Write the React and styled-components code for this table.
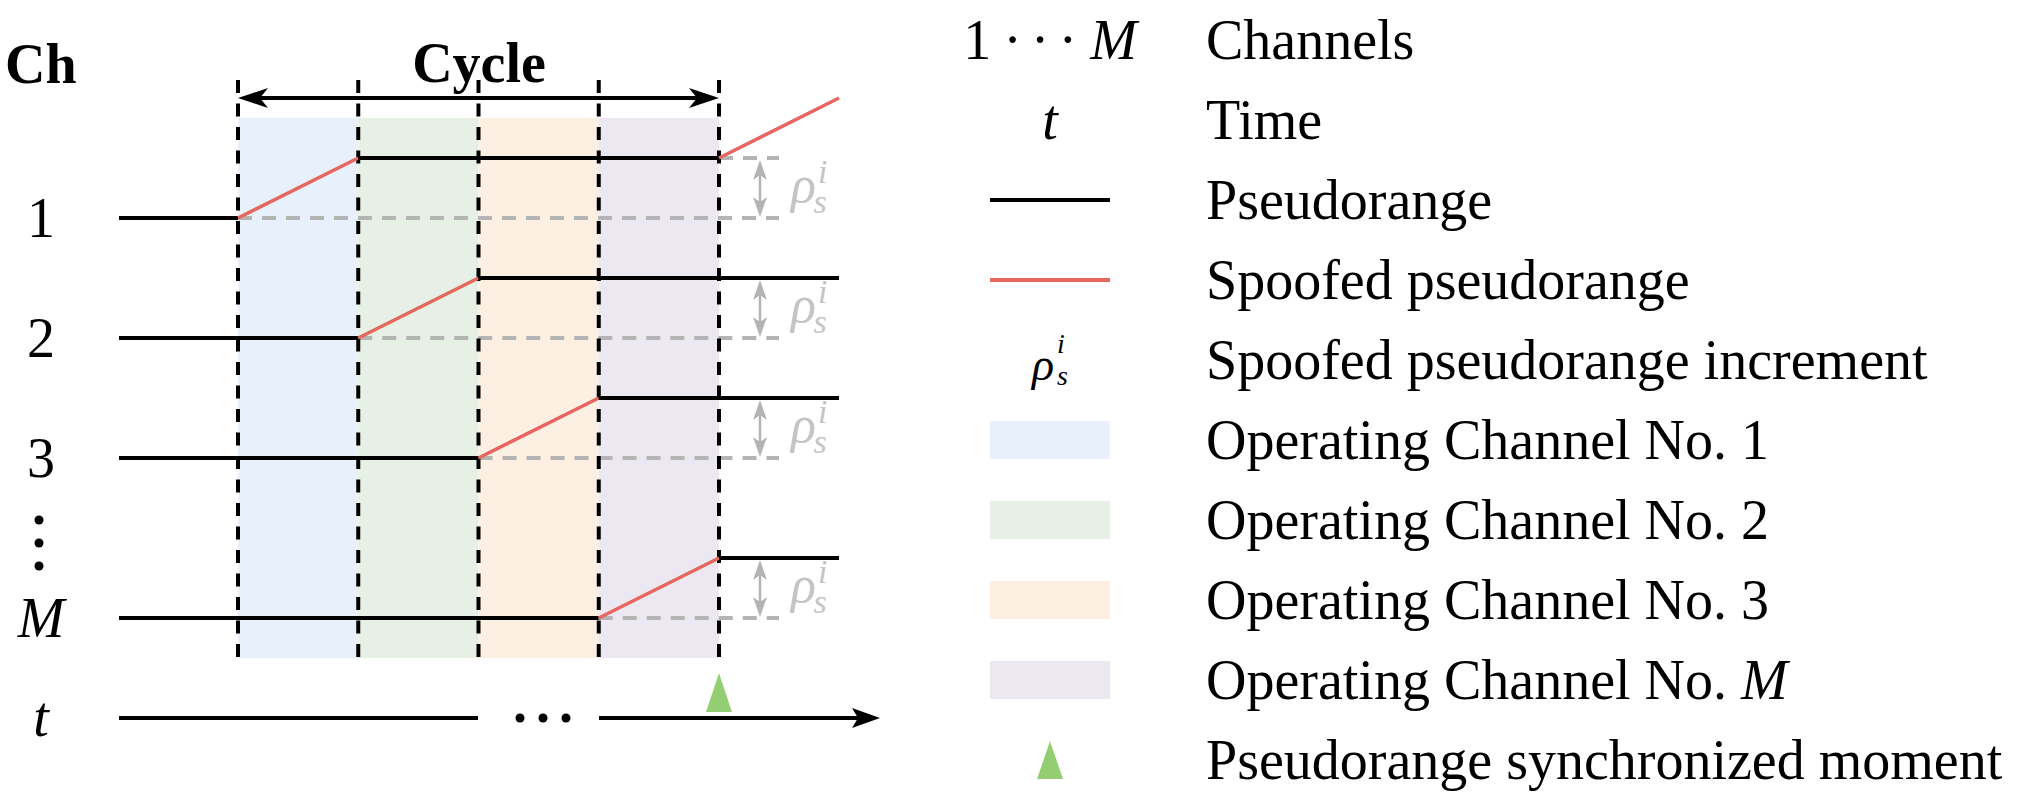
import React from 'react';
import styled, { createGlobalStyle } from 'styled-components';

const GlobalStyle = createGlobalStyle`
  html, body { margin: 0; padding: 0; background: #ffffff; }
  body {
    width: 2020px;
    height: 800px;
    overflow: hidden;
    font-family: "Liberation Serif", "Times New Roman", serif;
    color: #000000;
  }
`;

const BANDS = ['#e8f0fc', '#e7f0e5', '#fdf0e3', '#ece8f1'];
const RED = '#e5675f';
const GRAY = '#b4b4b4';
const RHO_GRAY = '#c4c4c4';
const GREEN = '#93cf72';

const X = [238, 358.25, 478.5, 598.75, 719];
const LEFT = 119;
const RIGHT = 839;
const GUIDE_END = 779;
const RISE = 60;
const ROWS = [
  { label: '1', y: 218 },
  { label: '2', y: 338 },
  { label: '3', y: 458 },
  { label: 'M', y: 618, italic: true },
];

/* ---------- page layout ---------- */
const Page = styled.div`
  display: flex;
  align-items: flex-start;
  width: 2020px;
  height: 800px;
`;

/* ---------- diagram (drawing) ---------- */
const Figure = styled.svg`
  display: block;
  flex: 0 0 960px;
  width: 960px;
  height: 800px;
`;

const Band = styled.rect`
  fill: ${(p) => p.$fill};
`;

const Solid = styled.line`
  stroke: ${(p) => p.$color || '#000'};
  stroke-width: ${(p) => p.$w || 4}px;
  stroke-linecap: butt;
`;

const Guide = styled.line`
  stroke: ${GRAY};
  stroke-width: 4px;
  stroke-dasharray: 14 10;
`;

const Divider = styled.line`
  stroke: #000;
  stroke-width: 4px;
  stroke-dasharray: 13 10.5;
`;

const Head = styled.path`
  fill: ${(p) => p.$color || '#000'};
`;

const Dot = styled.circle`
  fill: #000;
`;

const Marker = styled.polygon`
  fill: ${GREEN};
`;

const Label = styled.text`
  font-family: "Liberation Serif", "Times New Roman", serif;
  font-size: ${(p) => p.$size || 56}px;
  font-weight: ${(p) => (p.$bold ? 700 : 400)};
  font-style: ${(p) => (p.$italic ? 'italic' : 'normal')};
  fill: ${(p) => p.$color || '#000'};
`;

const Script = styled.tspan`
  font-size: 34px;
`;

function RhoMark({ y }) {
  return (
    <Label x={791} y={y - 16} $size={52} $italic $color={RHO_GRAY}>
      ρ
      <Script dx={2} dy={-19}>i</Script>
      <Script dx={-14} dy={30}>s</Script>
    </Label>
  );
}

function Increment({ yHigh, yLow }) {
  const x = 760;
  const top = yHigh + 2;
  const bot = yLow - 1;
  return (
    <g>
      <Solid x1={x} x2={x} y1={top + 14} y2={bot - 14} $color={GRAY} $w={2.5} />
      <Head $color={GRAY} d={`M ${x} ${top} L ${x + 7} ${top + 20} L ${x} ${top + 15} L ${x - 7} ${top + 20} Z`} />
      <Head $color={GRAY} d={`M ${x} ${bot} L ${x + 7} ${bot - 20} L ${x} ${bot - 15} L ${x - 7} ${bot - 20} Z`} />
    </g>
  );
}

function Diagram() {
  return (
    <Figure viewBox="0 0 960 800">
      {BANDS.map((c, i) => (
        <Band key={c} x={X[i]} y={118} width={X[i + 1] - X[i]} height={540} $fill={c} />
      ))}

      {ROWS.map((r, k) => (
        <Guide key={`g${k}`} x1={X[k]} x2={GUIDE_END} y1={r.y} y2={r.y} />
      ))}
      <Guide x1={719} x2={GUIDE_END} y1={158} y2={158} />

      {X.map((x) => (
        <Divider key={x} x1={x} x2={x} y1={80} y2={658} />
      ))}

      {/* cycle arrow */}
      <Solid x1={258} x2={699} y1={98} y2={98} />
      <Head d="M 238 98 L 268 88 L 260 98 L 268 108 Z" />
      <Head d="M 719 98 L 689 88 L 697 98 L 689 108 Z" />

      {/* channel traces */}
      {ROWS.map((r, k) => {
        const x0 = X[k];
        const x1 = X[k + 1];
        const yHigh = r.y - RISE;
        return (
          <g key={`r${k}`}>
            <Solid x1={LEFT} x2={x0} y1={r.y} y2={r.y} />
            <Solid x1={x0} y1={r.y} x2={x1} y2={yHigh} $color={RED} $w={3.5} />
            <Solid x1={x1} x2={k === 0 ? 719 : RIGHT} y1={yHigh} y2={yHigh} />
            {k === 0 && <Solid x1={719} y1={158} x2={RIGHT} y2={98} $color={RED} $w={3.5} />}
            <Increment yHigh={yHigh} yLow={r.y} />
            <RhoMark y={r.y} />
            <Label x={41} y={r.y + 19} textAnchor="middle" $italic={r.italic}>{r.label}</Label>
          </g>
        );
      })}

      {/* vertical ellipsis between rows */}
      <Dot cx={39} cy={520} r={4.5} />
      <Dot cx={39} cy={543} r={4.5} />
      <Dot cx={39} cy={566} r={4.5} />

      {/* time axis */}
      <Solid x1={LEFT} x2={478} y1={718} y2={718} />
      <Dot cx={520} cy={718} r={4.5} />
      <Dot cx={543} cy={718} r={4.5} />
      <Dot cx={566} cy={718} r={4.5} />
      <Solid x1={599} x2={862} y1={718} y2={718} />
      <Head d="M 880 718 L 852 708 L 858 718 L 852 728 Z" />
      <Marker points="706,712 732,712 719,673" />
      <Label x={41} y={736} textAnchor="middle" $italic>t</Label>

      <Label x={5} y={83} $bold>Ch</Label>
      <Label x={479} y={82} textAnchor="middle" $bold>Cycle</Label>
    </Figure>
  );
}

/* ---------- legend ---------- */
const Legend = styled.div`
  display: flex;
  flex-direction: column;
`;

const LegendRow = styled.div`
  display: grid;
  grid-template-columns: 180px max-content;
  column-gap: 66px;
  align-items: center;
  height: 80px;
`;

const SymbolCell = styled.div`
  display: flex;
  justify-content: center;
  align-items: center;
  height: 80px;
`;

const Caption = styled.span`
  font-size: 56px;
  line-height: 80px;
  white-space: nowrap;
`;

const Var = styled.i`
  font-style: italic;
`;

const MathText = styled.span`
  display: inline-flex;
  align-items: baseline;
  font-size: 56px;
  line-height: 80px;
`;

const Cdots = styled.span`
  letter-spacing: 9px;
  margin: 0 4px 0 12px;
`;

const LineMark = styled.span`
  display: block;
  width: 120px;
  height: 4px;
  background: ${(p) => p.$color};
`;

const Swatch = styled.span`
  display: block;
  width: 120px;
  height: 38px;
  background: ${(p) => p.$color};
`;

const Triangle = styled.span`
  display: block;
  width: 0;
  height: 0;
  border-left: 13px solid transparent;
  border-right: 13px solid transparent;
  border-bottom: 38px solid ${GREEN};
`;

const RhoSym = styled.span`
  display: inline-flex;
  align-items: center;
`;

const RhoGlyph = styled.span`
  font-style: italic;
  font-size: 46px;
  line-height: 46px;
  padding-top: 10px;
`;

const ScriptStack = styled.span`
  display: inline-flex;
  flex-direction: column;
  font-style: italic;
  font-size: 28px;
  line-height: 24px;
  gap: 8px;
  margin-left: 3px;
`;

const ITEMS = [
  {
    key: 'ch',
    sym: (
      <MathText>
        1<Cdots>···</Cdots>
        <Var>M</Var>
      </MathText>
    ),
    text: 'Channels',
  },
  { key: 't', sym: <MathText><Var>t</Var></MathText>, text: 'Time' },
  { key: 'pr', sym: <LineMark $color="#000" />, text: 'Pseudorange' },
  { key: 'spr', sym: <LineMark $color={RED} />, text: 'Spoofed pseudorange' },
  {
    key: 'rho',
    sym: (
      <RhoSym>
        <RhoGlyph>ρ</RhoGlyph>
        <ScriptStack>
          <span>i</span>
          <span>s</span>
        </ScriptStack>
      </RhoSym>
    ),
    text: 'Spoofed pseudorange increment',
  },
  { key: 'op1', sym: <Swatch $color={BANDS[0]} />, text: 'Operating Channel No. 1' },
  { key: 'op2', sym: <Swatch $color={BANDS[1]} />, text: 'Operating Channel No. 2' },
  { key: 'op3', sym: <Swatch $color={BANDS[2]} />, text: 'Operating Channel No. 3' },
  {
    key: 'opm',
    sym: <Swatch $color={BANDS[3]} />,
    text: (
      <>
        Operating Channel No. <Var>M</Var>
      </>
    ),
  },
  { key: 'sync', sym: <Triangle />, text: 'Pseudorange synchronized moment' },
];

export default function App() {
  return (
    <>
      <GlobalStyle />
      <Page>
        <Diagram />
        <Legend>
          {ITEMS.map((it) => (
            <LegendRow key={it.key}>
              <SymbolCell>{it.sym}</SymbolCell>
              <Caption>{it.text}</Caption>
            </LegendRow>
          ))}
        </Legend>
      </Page>
    </>
  );
}
